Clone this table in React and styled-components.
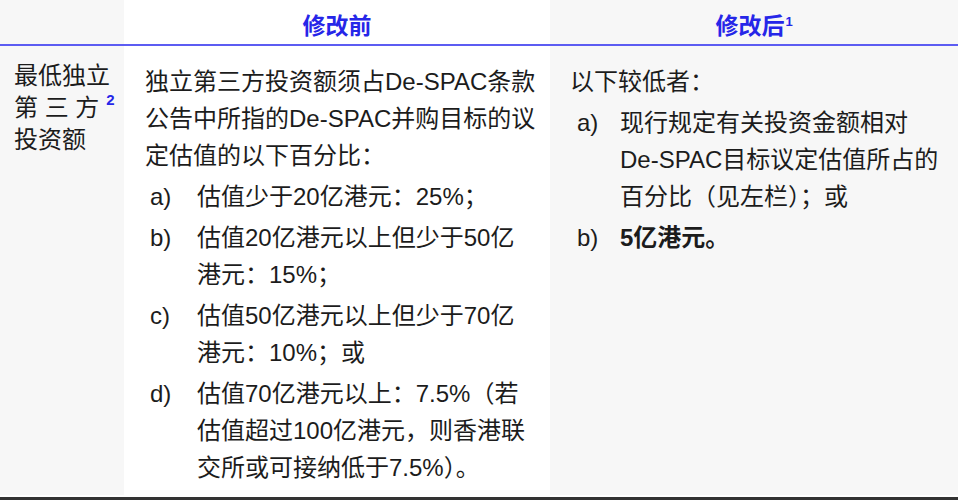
import React from "react";
import styled, { createGlobalStyle } from "styled-components";

const GlobalStyle = createGlobalStyle`
  html, body {
    margin: 0;
    padding: 0;
    background: #ffffff;
  }
  body {
    font-family: "Liberation Sans", "Noto Sans CJK SC", sans-serif;
    color: #1c1c1c;
  }
`;

const BLUE = "#2626e8";
const GRAY = "#f7f7f7";

const Table = styled.div`
  width: 958px;
  height: 500px;
  display: grid;
  grid-template-columns: 124px 426px 1fr;
  grid-template-rows: 44px 451px;
  border-bottom: 3px solid #333333;
  box-sizing: border-box;
  overflow: hidden;
`;

const HeadCell = styled.div`
  background: ${(p) => (p.$shaded ? GRAY : "#ffffff")};
  border-bottom: 2px solid #5c5cf2;
  display: flex;
  align-items: center;
  justify-content: center;
  padding-top: 4px;
  box-sizing: border-box;
  height: 46px;
  color: ${BLUE};
  font-size: 23px;
  font-weight: bold;
`;

const Sup = styled.sup`
  color: ${BLUE};
  font-weight: bold;
  font-size: ${(p) => p.$size || 13}px;
  line-height: 0;
  margin-left: ${(p) => p.$gap || 1}px;
  position: relative;
  top: -2px;
`;

const Cell = styled.div`
  background: ${(p) => (p.$shaded ? GRAY : "#ffffff")};
  padding: ${(p) => p.$pad};
  margin-top: 2px;
  box-sizing: border-box;
  font-size: 24px;
  line-height: 37px;
`;

const LabelCell = styled(Cell)`
  line-height: 32px;
`;

const Line = styled.div`
  white-space: nowrap;
`;

const Item = styled.div`
  display: grid;
  grid-template-columns: ${(p) => p.$marker}px 1fr;
  margin-top: 4px;
  padding-left: ${(p) => p.$indent}px;
`;

const Marker = styled.div`
  white-space: nowrap;
`;

const Strong = styled.span`
  font-weight: bold;
`;

const beforeItems = [
  { m: "a)", lines: ["估值少于20亿港元：25%；"] },
  { m: "b)", lines: ["估值20亿港元以上但少于50亿", "港元：15%；"] },
  { m: "c)", lines: ["估值50亿港元以上但少于70亿", "港元：10%；或"] },
  {
    m: "d)",
    lines: [
      "估值70亿港元以上：7.5%（若",
      "估值超过100亿港元，则香港联",
      "交所或可接纳低于7.5%）。",
    ],
  },
];

export default function App() {
  return (
    <>
      <GlobalStyle />
      <Table>
        <HeadCell $shaded />
        <HeadCell>修改前</HeadCell>
        <HeadCell $shaded>
          修改后
          <Sup $size={13}>1</Sup>
        </HeadCell>

        <LabelCell $shaded $pad="14px 0 0 14px">
          <Line>最低独立</Line>
          <Line>
            第 三 方<Sup $size={15} $gap={7}>2</Sup>
          </Line>
          <Line>投资额</Line>
        </LabelCell>

        <Cell $pad="17px 0 0 21px">
          <Line>独立第三方投资额须占De-SPAC条款</Line>
          <Line>公告中所指的De-SPAC并购目标的议</Line>
          <Line>定估值的以下百分比：</Line>
          {beforeItems.map((it) => (
            <Item key={it.m} $marker={47} $indent={5}>
              <Marker>{it.m}</Marker>
              <div>
                {it.lines.map((l) => (
                  <Line key={l}>{l}</Line>
                ))}
              </div>
            </Item>
          ))}
        </Cell>

        <Cell $shaded $pad="17px 0 0 20px">
          <Line>以下较低者：</Line>
          <Item $marker={43} $indent={7}>
            <Marker>a)</Marker>
            <div>
              <Line>现行规定有关投资金额相对</Line>
              <Line>De-SPAC目标议定估值所占的</Line>
              <Line>百分比（见左栏）；或</Line>
            </div>
          </Item>
          <Item $marker={43} $indent={7}>
            <Marker>b)</Marker>
            <div>
              <Line>
                <Strong>5亿港元。</Strong>
              </Line>
            </div>
          </Item>
        </Cell>
      </Table>
    </>
  );
}
